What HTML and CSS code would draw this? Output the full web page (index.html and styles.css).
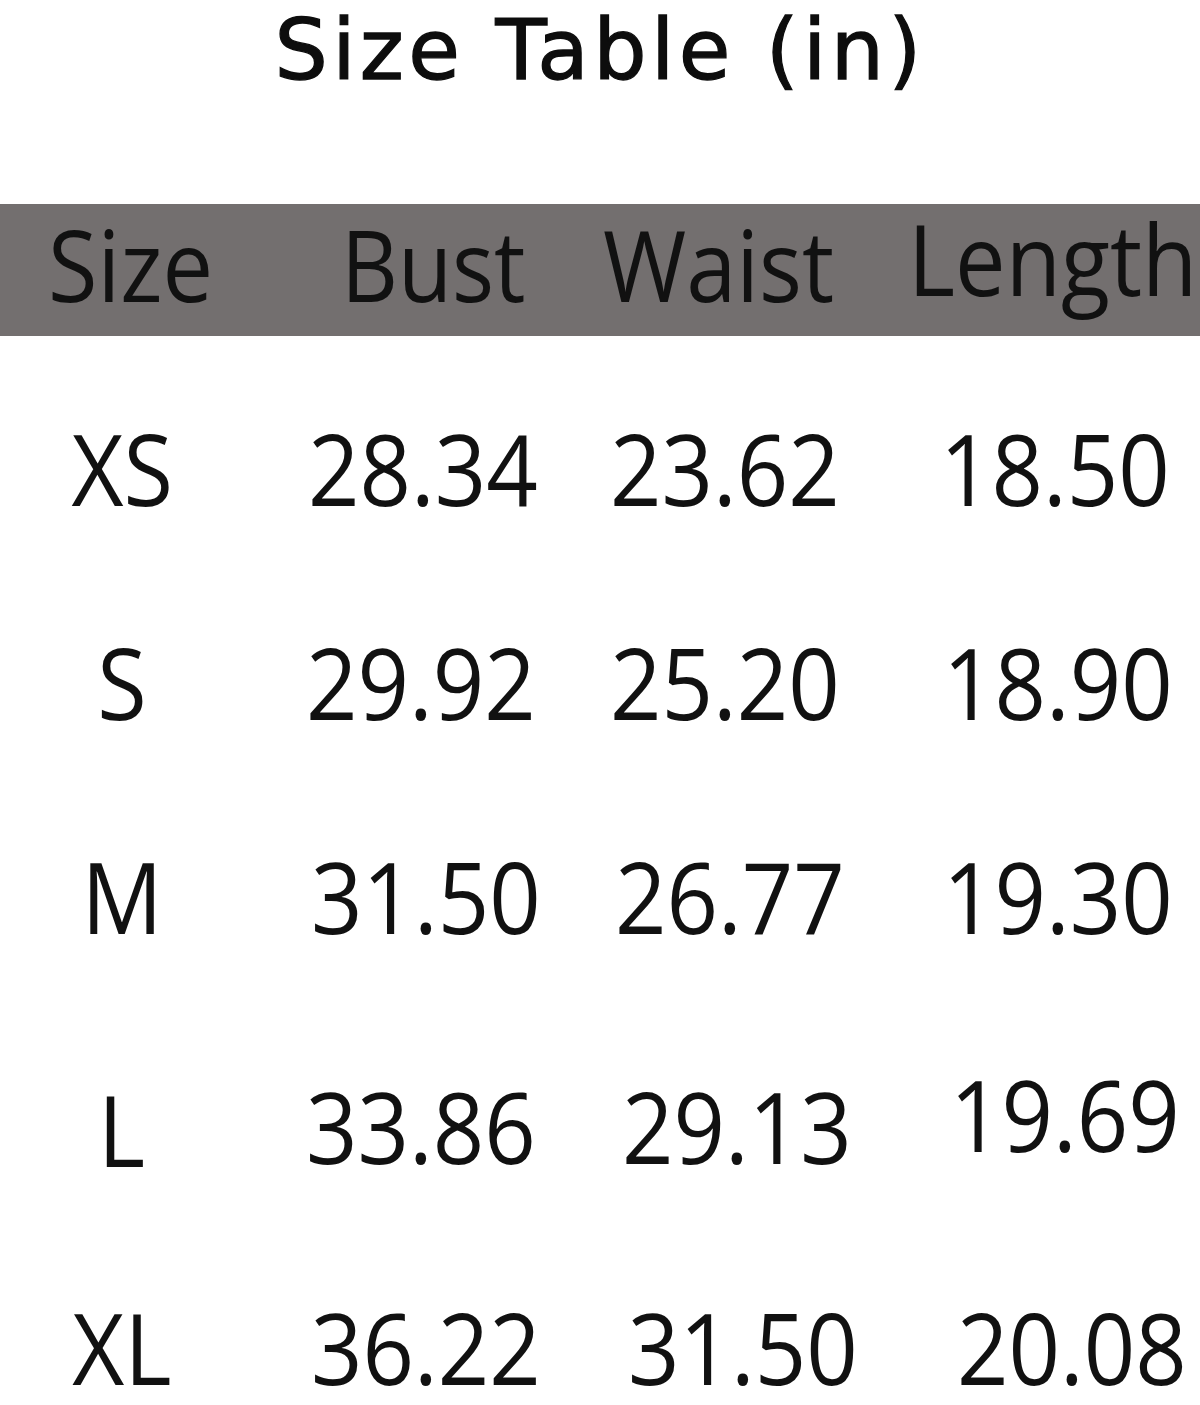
FILE: index.html
```html
<!DOCTYPE html>
<html lang="en">
<head>
<meta charset="utf-8">
<title>Size Table (in)</title>
<link rel="stylesheet" href="styles.css">
</head>
<body>
<div class="page">
  <h1 class="title">Size Table (in)</h1>
  <div class="head">
    <div class="hcell hc-size">Size</div>
    <div class="hcell hc-bust">Bust</div>
    <div class="hcell hc-waist">Waist</div>
    <div class="hcell hc-length">Length</div>
  </div>
  <div class="rows">
    <div class="row r-xs">
      <div class="cell c-size">XS</div>
      <div class="cell c-bust">28.34</div>
      <div class="cell c-waist">23.62</div>
      <div class="cell c-length">18.50</div>
    </div>
    <div class="row r-s">
      <div class="cell c-size">S</div>
      <div class="cell c-bust">29.92</div>
      <div class="cell c-waist">25.20</div>
      <div class="cell c-length">18.90</div>
    </div>
    <div class="row r-m">
      <div class="cell c-size">M</div>
      <div class="cell c-bust">31.50</div>
      <div class="cell c-waist">26.77</div>
      <div class="cell c-length">19.30</div>
    </div>
    <div class="row r-l">
      <div class="cell c-size">L</div>
      <div class="cell c-bust">33.86</div>
      <div class="cell c-waist">29.13</div>
      <div class="cell c-length raised">19.69</div>
    </div>
    <div class="row r-xl">
      <div class="cell c-size">XL</div>
      <div class="cell c-bust">36.22</div>
      <div class="cell c-waist">31.50</div>
      <div class="cell c-length">20.08</div>
    </div>
  </div>
</div>
</body>
</html>
```

FILE: styles.css
```css
html, body {
  margin: 0;
  padding: 0;
  background: #ffffff;
  overflow: hidden;
}

.page {
  width: 1200px;
  color: #111111;
}

.title {
  margin: 0;
  height: 100px;
  font-family: "Comic Sans MS", "DejaVu Sans", sans-serif;
  font-weight: normal;
  font-size: 84px;
  line-height: 100px;
  letter-spacing: 4.4px;
  text-align: center;
  color: #0d0d0d;
  -webkit-text-stroke: 1.3px #0d0d0d;
}

/* header bar */
.head {
  margin-top: 104px;
  height: 132px;
  background: #736f6f;
  display: grid;
  grid-template-columns: 340px 262px 309px 1fr;
  align-items: start;
  font-family: "Open Sans", "Noto Sans", sans-serif;
  font-size: 98px;
  line-height: 120px;
  color: #111111;
  white-space: nowrap;
}

.hcell {
  justify-self: start;
  transform: scaleX(0.92);
  transform-origin: left center;
}

.hc-size { margin-left: 48px; }
.hc-bust { margin-left: 1px; transform: scaleX(0.9); }
.hc-waist { margin-left: 1px; }
.hc-length { margin-top: -6px; margin-left: -3px; }

/* body rows */
.rows {
  margin-top: 92px;
  display: flex;
  flex-direction: column;
  gap: 134px;
  font-family: "Open Sans", "Noto Sans", sans-serif;
  font-size: 98px;
  line-height: 80px;
  color: #111111;
}

.row {
  height: 80px;
  display: grid;
  grid-template-columns: 244px 366px 330px 1fr;
  white-space: nowrap;
}

.cell {
  justify-self: start;
  transform: scaleX(0.92);
  transform-origin: left center;
}

.c-size {
  justify-self: center;
  transform-origin: center center;
}
.c-bust { margin-left: 64px; }
.c-waist { margin-left: 0; }
.c-length { margin-left: 0; }

.r-s .c-bust { margin-left: 62px; }
.r-s .c-length { margin-left: 3px; }

.r-m .c-bust { margin-left: 67px; }
.r-m .c-waist { margin-left: 5px; }
.r-m .c-length { margin-left: 3px; }

.r-l { margin-top: 16px; }
.r-l .c-bust { margin-left: 62px; }
.r-l .c-waist { margin-left: 12px; }
.r-l .c-length { margin-left: 10px; }
.r-l .c-size { padding-top: 3px; }
.raised { margin-top: -12px; }

.r-xl { margin-top: 7px; }
.r-xl .c-bust { margin-left: 67px; }
.r-xl .c-waist { margin-left: 18px; }
.r-xl .c-length { margin-left: 17px; }
```
